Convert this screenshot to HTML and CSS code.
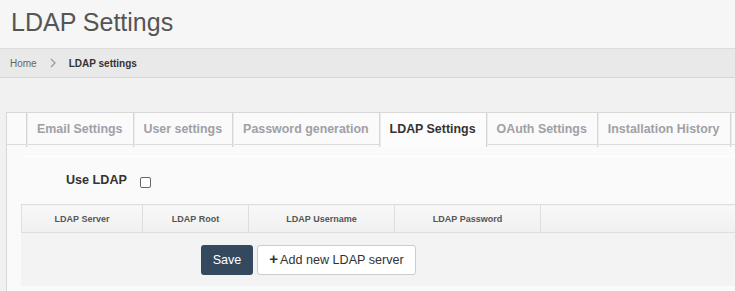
FILE: index.html
```html
<!DOCTYPE html>
<html lang="en">
<head>
    <meta charset="UTF-8">
    <title>LDAP Settings</title>
    <link rel="stylesheet" href="styles.css">
</head>
<body>
    <header class="page-header">
        <h1>LDAP Settings</h1>
    </header>

    <nav class="breadcrumb">
        <a href="#">Home</a>
        <svg class="crumb-sep" width="6" height="10" viewBox="0 0 6 10"><polyline points="1,1 5,5 1,9" fill="none" stroke="#9a9a9a" stroke-width="1.3"/></svg>
        <span class="crumb-current">LDAP settings</span>
    </nav>

    <main class="content">
        <div class="panel">
            <ul class="tabs">
                <li class="tab-spacer"></li>
                <li class="tab">Email Settings</li>
                <li class="tab">User settings</li>
                <li class="tab">Password generation</li>
                <li class="tab active">LDAP Settings</li>
                <li class="tab">OAuth Settings</li>
                <li class="tab">Installation History</li>
                <li class="tab-rest"></li>
            </ul>

            <div class="panel-body">
                <div class="form-row">
                    <label for="useLdap">Use LDAP</label>
                    <input type="checkbox" id="useLdap">
                </div>

                <table class="server-table">
                    <thead>
                        <tr>
                            <th class="col-server">LDAP Server</th>
                            <th class="col-root">LDAP Root</th>
                            <th class="col-user">LDAP Username</th>
                            <th class="col-pass">LDAP Password</th>
                            <th></th>
                        </tr>
                    </thead>
                </table>

                <div class="table-footer">
                    <button class="btn btn-save">Save</button>
                    <button class="btn btn-default"><span class="plus">+</span>Add new LDAP server</button>
                </div>
            </div>
        </div>
    </main>
</body>
</html>
```

FILE: styles.css
```css
* {
    margin: 0;
    padding: 0;
    box-sizing: border-box;
}

body {
    font-family: 'Liberation Sans', Arial, sans-serif;
    font-size: 12.6px;
    background: #f1f1f1;
    color: #333;
    overflow: hidden;
}

.page-header {
    height: 49px;
    background: #f6f6f6;
    border-bottom: 1px solid #dcdcdc;
    padding: 7px 0 0 11px;
}

.page-header h1 {
    font-size: 25px;
    font-weight: normal;
    color: #555;
    line-height: 30px;
}

.breadcrumb {
    display: flex;
    align-items: center;
    height: 29px;
    background: #e9e9e9;
    border-bottom: 1px solid #d6d6d6;
    padding-left: 10px;
    font-size: 10px;
}

.breadcrumb a {
    color: #666;
    text-decoration: none;
}

.crumb-sep {
    margin: 0 13px 0 13px;
}

.crumb-current {
    font-weight: bold;
    color: #333;
}

.content {
    padding: 34px 0 0 6px;
}

.panel {
    width: 770px;
    height: 200px;
    background: #fafafa;
    border-top: 1px solid #d8d8d8;
    border-left: 1px solid #d8d8d8;
}

.tabs {
    display: flex;
    list-style: none;
    height: 32px;
    border-bottom: 1px solid #dcdcdc;
}

.tab-spacer {
    width: 19px;
}

.tab {
    height: 34px;
    padding: 0 10px;
    line-height: 32px;
    font-size: 12.42px;
    font-weight: bold;
    color: #a0a0a6;
    border-left: 1px solid #d6d6d6;
    box-shadow: inset 1px 0 0 #ececec;
    white-space: nowrap;
}

.tab.active {
    color: #333;
    background: #fcfcfc;
}

.tab-rest {
    flex: 1;
    height: 34px;
    border-left: 1px solid #d6d6d6;
    box-shadow: inset 1px 0 0 #ececec;
}

.panel-body {
    padding: 11px 0 0 14px;
}

.form-row {
    display: flex;
    align-items: center;
    height: 48px;
    border-top: 1px solid #fff;
    padding-left: 45px;
}

.form-row label {
    font-weight: bold;
    font-size: 12.6px;
    color: #333;
    margin-right: 13px;
    margin-top: -2px;
}

.form-row input {
    appearance: none;
    width: 11px;
    height: 11px;
    border: 1px solid #666;
    border-radius: 2px;
    background: #fff;
    margin-top: 3px;
}

.server-table {
    border-collapse: collapse;
    width: 760px;
    table-layout: fixed;
}

.server-table th {
    height: 28px;
    font-size: 9px;
    font-weight: bold;
    color: #555;
    text-align: center;
    background: linear-gradient(#f8f8f8, #f0f0f0);
    border: 1px solid #dedede;
}

.col-server { width: 121px; }
.col-root { width: 106px; }
.col-user { width: 146px; }
.col-pass { width: 146px; }

.table-footer {
    display: flex;
    gap: 4px;
    height: 53px;
    background: #f3f3f3;
    padding: 12px 0 0 180px;
}

.btn {
    height: 30px;
    border-radius: 3px;
    font-family: 'Liberation Sans', Arial, sans-serif;
    font-size: 12.6px;
    cursor: pointer;
}

.btn-save {
    width: 52px;
    background: #34495e;
    color: #fff;
    border: none;
}

.btn-default {
    width: 159px;
    background: #fff;
    color: #333;
    border: 1px solid #ccc;
}

.plus {
    font-weight: bold;
    font-size: 15px;
    margin-right: 2px;
    line-height: 10px;
}
```
